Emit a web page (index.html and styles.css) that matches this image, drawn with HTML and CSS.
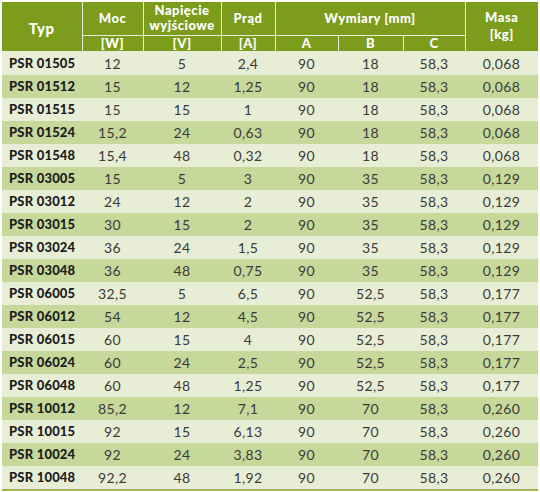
FILE: index.html
```html
<!DOCTYPE html>
<html>
<head>
  <meta charset="utf-8">
  <title>PSR</title>
  <link rel="stylesheet" href="styles.css">
</head>
<body>
<table class="spec">
  <colgroup>
    <col class="c-typ"><col class="c-moc"><col class="c-nap"><col class="c-prad">
    <col class="c-a"><col class="c-b"><col class="c-c"><col class="c-masa">
  </colgroup>
  <thead>
    <tr class="h1">
      <th rowspan="2" class="typ">Typ</th>
      <th>Moc</th>
      <th>Napięcie<br>wyjściowe</th>
      <th>Prąd</th>
      <th colspan="3">Wymiary [mm]</th>
      <th rowspan="2" class="masa">Masa<br>[kg]</th>
    </tr>
    <tr class="h2">
      <th>[W]</th><th>[V]</th><th>[A]</th><th>A</th><th>B</th><th>C</th>
    </tr>
  </thead>
  <tbody>
    <tr><td>PSR 01505</td><td>12</td><td>5</td><td>2,4</td><td>90</td><td>18</td><td>58,3</td><td>0,068</td></tr>
    <tr><td>PSR 01512</td><td>15</td><td>12</td><td>1,25</td><td>90</td><td>18</td><td>58,3</td><td>0,068</td></tr>
    <tr><td>PSR 01515</td><td>15</td><td>15</td><td>1</td><td>90</td><td>18</td><td>58,3</td><td>0,068</td></tr>
    <tr><td>PSR 01524</td><td>15,2</td><td>24</td><td>0,63</td><td>90</td><td>18</td><td>58,3</td><td>0,068</td></tr>
    <tr><td>PSR 01548</td><td>15,4</td><td>48</td><td>0,32</td><td>90</td><td>18</td><td>58,3</td><td>0,068</td></tr>
    <tr><td>PSR 03005</td><td>15</td><td>5</td><td>3</td><td>90</td><td>35</td><td>58,3</td><td>0,129</td></tr>
    <tr><td>PSR 03012</td><td>24</td><td>12</td><td>2</td><td>90</td><td>35</td><td>58,3</td><td>0,129</td></tr>
    <tr><td>PSR 03015</td><td>30</td><td>15</td><td>2</td><td>90</td><td>35</td><td>58,3</td><td>0,129</td></tr>
    <tr><td>PSR 03024</td><td>36</td><td>24</td><td>1,5</td><td>90</td><td>35</td><td>58,3</td><td>0,129</td></tr>
    <tr><td>PSR 03048</td><td>36</td><td>48</td><td>0,75</td><td>90</td><td>35</td><td>58,3</td><td>0,129</td></tr>
    <tr><td>PSR 06005</td><td>32,5</td><td>5</td><td>6,5</td><td>90</td><td>52,5</td><td>58,3</td><td>0,177</td></tr>
    <tr><td>PSR 06012</td><td>54</td><td>12</td><td>4,5</td><td>90</td><td>52,5</td><td>58,3</td><td>0,177</td></tr>
    <tr><td>PSR 06015</td><td>60</td><td>15</td><td>4</td><td>90</td><td>52,5</td><td>58,3</td><td>0,177</td></tr>
    <tr><td>PSR 06024</td><td>60</td><td>24</td><td>2,5</td><td>90</td><td>52,5</td><td>58,3</td><td>0,177</td></tr>
    <tr><td>PSR 06048</td><td>60</td><td>48</td><td>1,25</td><td>90</td><td>52,5</td><td>58,3</td><td>0,177</td></tr>
    <tr><td>PSR 10012</td><td>85,2</td><td>12</td><td>7,1</td><td>90</td><td>70</td><td>58,3</td><td>0,260</td></tr>
    <tr><td>PSR 10015</td><td>92</td><td>15</td><td>6,13</td><td>90</td><td>70</td><td>58,3</td><td>0,260</td></tr>
    <tr><td>PSR 10024</td><td>92</td><td>24</td><td>3,83</td><td>90</td><td>70</td><td>58,3</td><td>0,260</td></tr>
    <tr><td>PSR 10048</td><td>92,2</td><td>48</td><td>1,92</td><td>90</td><td>70</td><td>58,3</td><td>0,260</td></tr>
  </tbody>
</table>
</body>
</html>
```

FILE: styles.css
```css
body { margin: 2px; background-color: #ffffff; }
table.spec { width: 536px; border-collapse: collapse; table-layout: fixed; font-family: Lato, "Liberation Sans", sans-serif; font-size: 14px; color: #3a3a3a; }
table.spec col.c-typ { width: 80px; }
table.spec col.c-moc { width: 61px; }
table.spec col.c-nap { width: 78px; }
table.spec col.c-prad { width: 54px; }
table.spec col.c-a { width: 63px; }
table.spec col.c-b { width: 65px; }
table.spec col.c-c { width: 62px; }
table.spec col.c-masa { width: 73px; }
table.spec th { background-color: #7c9c1c; color: #ffffff; font-weight: 900; font-size: 13px; letter-spacing: 0.5px; border: 1px solid #e8eed6; padding: 0; text-align: center; line-height: 15px; }
table.spec thead tr:first-child th { border-top: 0; }
table.spec th:first-child { border-left: 0; }
table.spec th.masa { border-right: 0; line-height: 17px; }
table.spec tr.h1 { height: 33px; }
table.spec tr.h2 { height: 16px; }
table.spec th.typ { font-size: 15px; padding-top: 4px; }
table.spec td { height: 23px; padding: 0; text-align: center; letter-spacing: 0.4px; }
table.spec td:first-child { text-align: left; padding-left: 7px; font-weight: 900; font-size: 13px; letter-spacing: 0.2px; color: #1c1c1c; }
table.spec tbody tr:nth-child(odd) td { background-color: #e8eed6; }
table.spec tbody tr:nth-child(even) td { background-color: #c7d89b; }
table.spec tbody tr:last-child td { border-bottom: 2px solid #9db45a; }
```
